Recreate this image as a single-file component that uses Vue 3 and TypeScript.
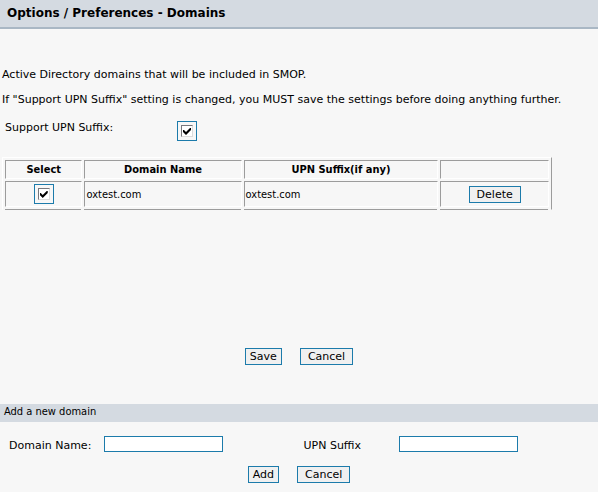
<script setup lang="ts">
import { ref } from 'vue'

interface Domain {
  id: number
  name: string
  suffix: string
  selected: boolean
}

const supportSuffix = ref(true)
const domains = ref<Domain[]>([
  { id: 1, name: 'oxtest.com', suffix: 'oxtest.com', selected: true },
])
const newName = ref('')
const newSuffix = ref('')

function remove(id: number) {
  domains.value = domains.value.filter((d) => d.id !== id)
}

function clearForm() {
  newName.value = ''
  newSuffix.value = ''
}

function add() {
  if (!newName.value) return
  domains.value.push({
    id: Date.now(),
    name: newName.value,
    suffix: newSuffix.value,
    selected: true,
  })
  clearForm()
}
</script>

<template>
  <div class="page">
    <header class="title-bar">
      <h1>Options / Preferences - Domains</h1>
    </header>

    <main>
      <section class="settings">
        <p>Active Directory domains that will be included in SMOP.</p>
        <p>If "Support UPN Suffix" setting is changed, you MUST save the settings before doing anything further.</p>

        <div class="support">
          <label for="support-suffix">Support UPN Suffix:</label>
          <input id="support-suffix" v-model="supportSuffix" type="checkbox" class="check" />
        </div>

        <table>
          <colgroup>
            <col class="col-select" />
            <col class="col-name" />
            <col class="col-suffix" />
            <col class="col-action" />
          </colgroup>
          <thead>
            <tr>
              <th>Select</th>
              <th>Domain Name</th>
              <th>UPN Suffix(if any)</th>
              <th></th>
            </tr>
          </thead>
          <tbody>
            <tr v-for="d in domains" :key="d.id">
              <td class="center">
                <input v-model="d.selected" type="checkbox" class="check" :aria-label="d.name" />
              </td>
              <td>{{ d.name }}</td>
              <td>{{ d.suffix }}</td>
              <td class="center">
                <button type="button" class="wide" @click="remove(d.id)">Delete</button>
              </td>
            </tr>
          </tbody>
        </table>
      </section>

      <div class="actions">
        <button type="button">Save</button>
        <button type="button" class="wide">Cancel</button>
      </div>

      <form @submit.prevent="add">
        <h2>Add a new domain</h2>
        <div class="fields">
          <label for="new-name">Domain Name:</label>
          <input id="new-name" v-model="newName" type="text" />
          <label for="new-suffix">UPN Suffix</label>
          <input id="new-suffix" v-model="newSuffix" type="text" />
        </div>
        <div class="actions">
          <button type="submit">Add</button>
          <button type="button" class="wide" @click="clearForm">Cancel</button>
        </div>
      </form>
    </main>
  </div>
</template>

<style>
body {
  margin: 0;
  background: #f7f7f7;
}
</style>

<style scoped>
.page {
  min-height: 100vh;
  background: #f7f7f7;
  color: #000;
  font-family: Verdana, "DejaVu Sans", sans-serif;
  font-size: 11px;
  line-height: 13px;
}

.title-bar {
  padding: 7px;
  background: #d4dae1;
  border-bottom: 2px solid #a9b7c4;
}

h1 {
  margin: 0;
  font-size: 12px;
  line-height: 13px;
  font-weight: bold;
}

.settings {
  padding: 39px 2px 0;
}

p {
  margin: 0 0 12px;
}

.support {
  display: grid;
  grid-template-columns: 172px auto;
  justify-content: start;
  margin-top: 15px;
  padding-left: 3px;
}

.check {
  appearance: none;
  display: inline-grid;
  box-sizing: border-box;
  width: 20px;
  height: 20px;
  margin: 0;
  place-content: center;
  vertical-align: middle;
  border: 1px solid #1c7bab;
  background: #f7f7f7;
}

.check::before,
.check::after {
  content: "";
  grid-area: 1 / 1;
  place-self: center;
}

.check::before {
  width: 10px;
  height: 10px;
  border: 1px solid;
  border-color: #77777c #dcdcdc #dcdcdc #77777c;
  background: #fff;
}

.check:checked::after {
  width: 8px;
  height: 8px;
  background: #000;
  clip-path: polygon(0 3px, 1px 3px, 3px 5px, 7px 1px, 8px 1px, 8px 3px, 3px 8px, 0 5px);
}

table {
  width: 92.6%;
  margin-top: 16px;
  table-layout: fixed;
  border-collapse: separate;
  border-spacing: 2px;
  border: 1px solid;
  border-color: #fff #9c9c9c transparent #fff;
  font-family: Tahoma, "DejaVu Sans Condensed", "DejaVu Sans", sans-serif;
  font-size: 11px;
}

.col-select {
  width: 14.4%;
}

.col-name {
  width: 29.2%;
}

.col-suffix {
  width: 36.2%;
}

th,
td {
  position: relative;
  height: 17px;
  padding: 0 1px;
  border: 1px solid;
  border-color: #9c9c9c #fff #fff #9c9c9c;
  text-align: left;
}

td {
  height: 24px;
}

th,
.center {
  text-align: center;
}

/* Segmented rule under the last row */
tr:last-child td::after {
  content: "";
  position: absolute;
  left: -1px;
  right: 0;
  bottom: -4px;
  border-bottom: 1px solid #9c9c9c;
}

button {
  box-sizing: border-box;
  height: 17px;
  padding: 0 4px;
  border: 1px solid #1c7bab;
  border-radius: 0;
  background: #f0f0f0;
  color: #000;
  font-family: Verdana, "DejaVu Sans", sans-serif;
  font-size: 11px;
  line-height: 13px;
  vertical-align: middle;
}

.wide {
  padding: 0 7px;
}

.actions {
  display: flex;
  justify-content: center;
  gap: 18px;
}

.settings + .actions {
  padding: 138px 0 39px;
}

h2 {
  margin: 0;
  padding: 1px 4px 4px;
  background: #d4dae1;
  font-family: Tahoma, "DejaVu Sans Condensed", "DejaVu Sans", sans-serif;
  font-size: 11px;
  line-height: 13px;
  font-weight: normal;
}

.fields {
  display: grid;
  grid-template-columns: 95px 1fr 95px 1fr;
  padding: 14px 0 14px 9px;
}

.fields label {
  padding-top: 3px;
}

.fields input {
  box-sizing: border-box;
  width: 119px;
  height: 16px;
  padding: 0 2px;
  border: 1px solid #1c7bab;
  border-radius: 0;
  background: #fff;
  font: inherit;
}
</style>
